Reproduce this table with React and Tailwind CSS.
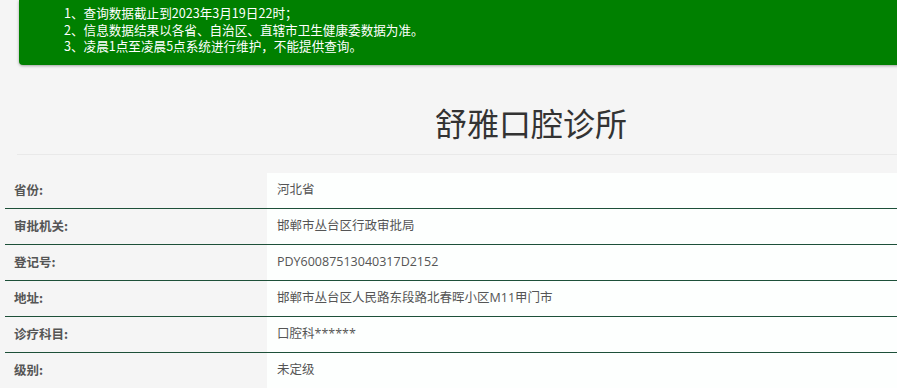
import React from 'react';

const notices = [
  '1、查询数据截止到2023年3月19日22时；',
  '2、信息数据结果以各省、自治区、直辖市卫生健康委数据为准。',
  '3、凌晨1点至凌晨5点系统进行维护，不能提供查询。',
];

const rows = [
  ['省份:', '河北省'],
  ['审批机关:', '邯郸市丛台区行政审批局'],
  ['登记号:', 'PDY60087513040317D2152'],
  ['地址:', '邯郸市丛台区人民路东段路北春晖小区M11甲门市'],
  ['诊疗科目:', '口腔科******'],
  ['级别:', '未定级'],
];

const font = { fontFamily: '"Microsoft YaHei", "Noto Sans CJK SC", "Liberation Sans", sans-serif' };
const valueFont = { fontFamily: '"Open Sans", "Noto Sans CJK SC", sans-serif' };

export default function App() {
  return (
    <div className="w-[897px] h-[388px] overflow-hidden bg-[#f5f5f5]" style={font}>
      <div className="w-[1060px]">
        {/* top notice */}
        <div className="ml-[19px] bg-[#008000] rounded-bl-[4px] pl-[45px] pt-[5px] pb-[10px] text-[12.6px] leading-[16.5px] text-white shadow-[0_1px_3px_rgba(0,0,0,0.35)]">
          {notices.map((n) => (
            <div key={n}>{n}</div>
          ))}
        </div>

        {/* title */}
        <div className="ml-[17px] w-[1028px] border-b border-[#e9e9e9] pt-[35px] pb-[9px] text-center text-[32px] leading-[45px] text-[#333]">
          舒雅口腔诊所
        </div>

        {/* detail table */}
        <div className="ml-[5px] mt-[18px]">
          {rows.map(([label, value], i) => (
            <div
              key={label}
              className={`flex h-[36px] ${i < rows.length - 1 ? 'border-b-[1.5px] border-[#1d5039]' : ''}`}
            >
              <div className="w-[262px] flex items-center pl-[9px] text-[12.5px] font-bold text-[#555]">
                {label}
              </div>
              <div className="flex-1 flex items-center pl-[10px] bg-[#fdfffe] text-[12.5px] text-[#555]" style={valueFont}>
                {value}
              </div>
            </div>
          ))}
        </div>
      </div>
    </div>
  );
}
